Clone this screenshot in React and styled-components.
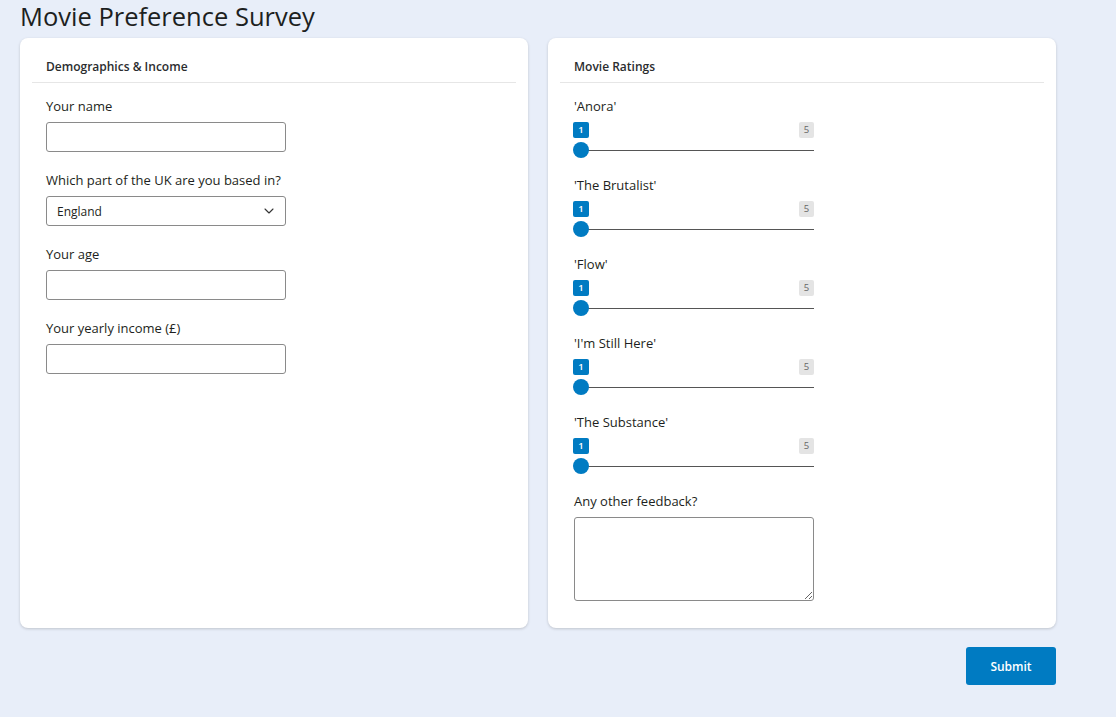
import styled, { createGlobalStyle } from "styled-components";
import { ChevronDown } from "lucide-react";

const GlobalStyle = createGlobalStyle`
  html, body {
    margin: 0;
    padding: 0;
    background: #e8eef9;
  }
  body {
    font-family: "Open Sans", "Liberation Sans", sans-serif;
    color: #1d1f21;
    min-height: 717px;
  }
`;

const Page = styled.div`
  width: 1036px;
  padding: 0 0 0 20px;
`;

const Title = styled.h1`
  margin: 0;
  height: 38px;
  font-size: 25.5px;
  font-weight: 400;
  line-height: 32px;
  color: #1d1f21;
`;

const Columns = styled.div`
  display: grid;
  grid-template-columns: 1fr 1fr;
  gap: 20px;
`;

const Card = styled.section`
  background: #fff;
  border-radius: 8px;
  box-shadow: 0 1px 3px rgba(0, 0, 0, 0.18);
  padding: 0 12px 27px;
  display: flex;
  flex-direction: column;
`;

const CardHeader = styled.div`
  padding: 20px 14px 6px;
  border-bottom: 1px solid #e6e6e6;
  font-size: 12px;
  font-weight: 600;
  line-height: 18px;
  color: #2a2c2e;
`;

const CardBody = styled.div`
  padding: 13px 14px 0;
  display: flex;
  flex-direction: column;
`;

const Group = styled.div`
  display: flex;
  flex-direction: column;
  margin-bottom: ${(p) => p.$gap ?? 18}px;
  &:last-child {
    margin-bottom: 0;
  }
`;

const Label = styled.label`
  font-size: 13px;
  line-height: 20px;
  margin-bottom: 6px;
  color: #1d1f21;
`;

const fieldBase = `
  box-sizing: border-box;
  width: 240px;
  border: 1px solid #8a8a8a;
  border-radius: 3px;
  background: #fff;
  font-family: "Open Sans", "Liberation Sans", sans-serif;
  font-size: 12px;
  color: #1d1f21;
  outline: none;
`;

const TextInput = styled.input`
  ${fieldBase}
  height: 30px;
  padding: 0 10px;
`;

const SelectWrap = styled.div`
  position: relative;
  width: 240px;
`;

const Select = styled.select`
  ${fieldBase}
  height: 30px;
  padding: 0 30px 0 10px;
  appearance: none;
`;

const Chevron = styled(ChevronDown)`
  position: absolute;
  right: 9px;
  top: 7px;
  pointer-events: none;
  color: #333;
`;

const TextArea = styled.textarea`
  ${fieldBase}
  height: 84px;
  padding: 6px 10px;
  resize: both;
`;

const SliderBlock = styled.div`
  position: relative;
  width: 240px;
  height: 36px;
`;

const Badge = styled.span`
  position: absolute;
  top: 0;
  ${(p) => (p.$end ? "right: 0;" : "left: -1px;")}
  min-width: ${(p) => (p.$end ? 15 : 16)}px;
  height: 16px;
  padding: 0 2px;
  box-sizing: border-box;
  border-radius: 2px;
  font-size: 9.5px;
  font-weight: ${(p) => (p.$end ? 400 : 600)};
  line-height: 16px;
  text-align: center;
  background: ${(p) => (p.$end ? "#e4e4e4" : "#007bc2")};
  color: ${(p) => (p.$end ? "#666" : "#fff")};
`;

const Track = styled.div`
  position: absolute;
  left: 0;
  right: 0;
  top: 28px;
  height: 1px;
  background: #555;
`;

const Thumb = styled.div`
  position: absolute;
  left: -1px;
  top: 20px;
  width: 16px;
  height: 16px;
  border-radius: 50%;
  background: #007bc2;
`;

const Footer = styled.div`
  display: flex;
  justify-content: flex-end;
  padding-top: 19px;
`;

const SubmitButton = styled.button`
  width: 90px;
  height: 38px;
  border: none;
  border-radius: 3px;
  background: #007bc2;
  color: #fff;
  font-family: "Open Sans", "Liberation Sans", sans-serif;
  font-size: 12px;
  font-weight: 600;
  cursor: pointer;
`;

const movies = ["'Anora'", "'The Brutalist'", "'Flow'", "'I'm Still Here'", "'The Substance'"];

const Rating = ({ title }) => (
  <Group $gap={17}>
    <Label>{title}</Label>
    <SliderBlock>
      <Badge>1</Badge>
      <Badge $end>5</Badge>
      <Track />
      <Thumb />
    </SliderBlock>
  </Group>
);

const App = () => (
  <>
    <GlobalStyle />
    <Page>
      <Title>Movie Preference Survey</Title>
      <Columns>
        <Card>
          <CardHeader>Demographics &amp; Income</CardHeader>
          <CardBody>
            <Group>
              <Label htmlFor="name">Your name</Label>
              <TextInput id="name" />
            </Group>
            <Group>
              <Label htmlFor="region">Which part of the UK are you based in?</Label>
              <SelectWrap>
                <Select id="region" defaultValue="England">
                  <option>England</option>
                  <option>Scotland</option>
                  <option>Wales</option>
                  <option>Northern Ireland</option>
                </Select>
                <Chevron size={16} strokeWidth={1.6} />
              </SelectWrap>
            </Group>
            <Group>
              <Label htmlFor="age">Your age</Label>
              <TextInput id="age" />
            </Group>
            <Group>
              <Label htmlFor="income">Your yearly income (£)</Label>
              <TextInput id="income" />
            </Group>
          </CardBody>
        </Card>
        <Card>
          <CardHeader>Movie Ratings</CardHeader>
          <CardBody>
            {movies.map((m) => (
              <Rating key={m} title={m} />
            ))}
            <Group>
              <Label htmlFor="feedback">Any other feedback?</Label>
              <TextArea id="feedback" />
            </Group>
          </CardBody>
        </Card>
      </Columns>
      <Footer>
        <SubmitButton type="button">Submit</SubmitButton>
      </Footer>
    </Page>
  </>
);

export default App;
